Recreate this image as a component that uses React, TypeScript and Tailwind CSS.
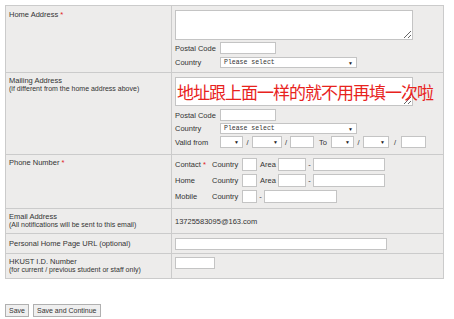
import React from "react";

const Req = () => <span className="text-[#e02020]"> *</span>;

function Box({ className = "" }: { className?: string }) {
  return <div className={"border border-[#c4c4c4] bg-white box-border " + className} />;
}

function Sel({ className = "", text = "" }: { className?: string; text?: string }) {
  return (
    <div
      className={
        "relative flex items-center border border-[#c4c4c4] bg-white box-border " + className
      }
    >
      <span className="pl-[3px] pt-[1px] font-['Liberation_Mono',monospace] text-[6.5px] leading-none text-[#333]">
        {text}
      </span>
      <span className="absolute right-[3px] top-1/2 -translate-y-1/2 text-[5px] leading-none text-[#222]">
        ▼
      </span>
    </div>
  );
}

function Lbl({ children, className = "" }: { children: React.ReactNode; className?: string }) {
  return <span className={"shrink-0 " + className}>{children}</span>;
}

export default function App() {
  return (
    <div className="w-[454px] h-[319px] bg-white font-['Liberation_Sans',Arial,sans-serif] text-[7.5px] leading-[9px] text-[#333] pt-[5px] pl-[5px]">
      <div className="w-[439px] border border-[#cbcbcb] bg-[#edeceb]">
        {/* Home Address */}
        <div className="grid grid-cols-[166px_1fr] h-[67px] border-b border-[#cbcbcb]">
          <div className="border-r border-[#cbcbcb] px-[3px] pt-[4px]">
            Home Address<Req />
          </div>
          <div className="pl-[3px] pt-[4px] flex flex-col">
            <textarea className="w-[238px] h-[30px] border border-[#c4c4c4] bg-white block" />
            <div className="flex items-center mt-[2px]">
              <Lbl className="w-[45px]">Postal Code</Lbl>
              <Box className="w-[56px] h-[12px]" />
            </div>
            <div className="flex items-center mt-[3px]">
              <Lbl className="w-[45px]">Country</Lbl>
              <Sel className="w-[137px] h-[11px]" text="Please select" />
            </div>
          </div>
        </div>

        {/* Mailing Address */}
        <div className="grid grid-cols-[166px_1fr] h-[82px] border-b border-[#cbcbcb]">
          <div className="border-r border-[#cbcbcb] px-[3px] pt-[3px]">
            <div>Mailing Address</div>
            <div className="text-[7px] leading-[8px]">(if different from the home address above)</div>
          </div>
          <div className="pl-[3px] pt-[4px] flex flex-col">
            <div className="relative">
              <textarea className="w-[238px] h-[29px] border border-[#c4c4c4] bg-white block" />
              <div className="absolute left-[2px] top-[6px] whitespace-nowrap font-['Noto_Sans_CJK_SC',sans-serif] text-[17px] leading-none tracking-[-1px] text-[#e8231d]">
                地址跟上面一样的就不用再填一次啦
              </div>
            </div>
            <div className="flex items-center mt-[3px]">
              <Lbl className="w-[45px]">Postal Code</Lbl>
              <Box className="w-[56px] h-[12px]" />
            </div>
            <div className="flex items-center mt-[2px]">
              <Lbl className="w-[45px]">Country</Lbl>
              <Sel className="w-[137px] h-[11px]" text="Please select" />
            </div>
            <div className="flex items-center mt-[2px]">
              <Lbl className="w-[45px]">Valid from</Lbl>
              <Sel className="w-[23px] h-[12px]" />
              <span className="w-[9px] text-center">/</span>
              <Sel className="w-[30px] h-[12px]" />
              <span className="w-[8px] text-center">/</span>
              <Box className="w-[24px] h-[12px]" />
              <span className="pl-[5px] w-[17px]">To</span>
              <Sel className="w-[23px] h-[12px]" />
              <span className="w-[9px] text-center">/</span>
              <Sel className="w-[26px] h-[12px]" />
              <span className="w-[12px] text-center">/</span>
              <Box className="w-[25px] h-[12px]" />
            </div>
          </div>
        </div>

        {/* Phone */}
        <div className="grid grid-cols-[166px_1fr] h-[54px] border-b border-[#cbcbcb]">
          <div className="border-r border-[#cbcbcb] px-[3px] pt-[3px]">
            Phone Number<Req />
          </div>
          <div className="pl-[3px] pt-[3px] flex flex-col">
            <div className="flex items-center">
              <Lbl className="w-[37px]">
                Contact<span className="text-[#e02020]"> *</span>
              </Lbl>
              <Lbl className="w-[30px]">Country</Lbl>
              <Box className="w-[15px] h-[13px]" />
              <Lbl className="pl-[3px] w-[21px]">Area</Lbl>
              <Box className="w-[28px] h-[13px]" />
              <span className="w-[7px] text-center">-</span>
              <Box className="w-[72px] h-[13px]" />
            </div>
            <div className="flex items-center mt-[3px]">
              <Lbl className="w-[37px]">Home</Lbl>
              <Lbl className="w-[30px]">Country</Lbl>
              <Box className="w-[15px] h-[13px]" />
              <Lbl className="pl-[3px] w-[21px]">Area</Lbl>
              <Box className="w-[28px] h-[13px]" />
              <span className="w-[7px] text-center">-</span>
              <Box className="w-[72px] h-[13px]" />
            </div>
            <div className="flex items-center mt-[3px]">
              <Lbl className="w-[37px]">Mobile</Lbl>
              <Lbl className="w-[30px]">Country</Lbl>
              <Box className="w-[15px] h-[13px]" />
              <span className="w-[7px] text-center">-</span>
              <Box className="w-[73px] h-[13px]" />
            </div>
          </div>
        </div>

        {/* Email */}
        <div className="grid grid-cols-[166px_1fr] h-[25px] border-b border-[#cbcbcb]">
          <div className="border-r border-[#cbcbcb] px-[3px] pt-[3px]">
            <div>Email Address</div>
            <div className="text-[7px] leading-[8px]">(All notifications will be sent to this email)</div>
          </div>
          <div className="pl-[3px] flex items-center">13725583095@163.com</div>
        </div>

        {/* Personal URL */}
        <div className="grid grid-cols-[166px_1fr] h-[20px] border-b border-[#cbcbcb]">
          <div className="border-r border-[#cbcbcb] px-[3px] flex items-center">
            Personal Home Page URL (optional)
          </div>
          <div className="pl-[3px] flex items-center">
            <Box className="w-[212px] h-[12px]" />
          </div>
        </div>

        {/* HKUST */}
        <div className="grid grid-cols-[166px_1fr] h-[24px]">
          <div className="border-r border-[#cbcbcb] px-[3px] pt-[3px]">
            <div>HKUST I.D. Number</div>
            <div className="text-[7px] leading-[8px]">(for current / previous student or staff only)</div>
          </div>
          <div className="pl-[3px] pt-[3px]">
            <Box className="w-[40px] h-[12px]" />
          </div>
        </div>
      </div>

      <div className="flex gap-[4px] mt-[25px] text-[7px]">
        <div className="h-[13px] px-[3px] flex items-center border border-[#b0b0b0] bg-[#efefef]">Save</div>
        <div className="h-[13px] px-[3px] flex items-center border border-[#b0b0b0] bg-[#efefef]">Save and Continue</div>
      </div>
    </div>
  );
}
